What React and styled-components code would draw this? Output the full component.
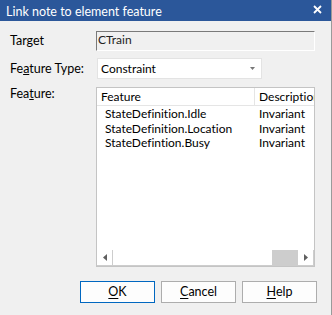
import React from "react";
import styled, { createGlobalStyle } from "styled-components";

const Global = createGlobalStyle`
  html, body { margin: 0; padding: 0; background: #f0f0f0; }
  body {
    font-family: "Lato", "Noto Sans", sans-serif;
    font-size: 12px;
    color: #000;
    font-variant-ligatures: none;
  }
`;

const Window = styled.div`
  width: 332px;
  height: 315px;
  box-sizing: border-box;
  border-right: 1px solid #9a9a9a;
  background: #f0f0f0;
  display: flex;
  flex-direction: column;
`;

const TitleBar = styled.div`
  height: 21px;
  background: #2b579a;
  color: #fff;
  display: flex;
  align-items: center;
  justify-content: space-between;
  padding: 2px 9px 0 6px;
  box-sizing: border-box;
  font-size: 12.5px;
`;

const CloseIcon = styled.svg`
  width: 9px;
  height: 9px;
  margin-top: -4px;
`;

const Body = styled.div`
  flex: 1;
  display: flex;
  flex-direction: column;
  padding: 10px 14px 0 10px;
`;

const Form = styled.div`
  display: grid;
  grid-template-columns: 86px 219px;
  row-gap: 7px;
  align-items: center;
`;

const Label = styled.div`
  line-height: 14px;
  font-size: 12.5px;
  align-self: ${(p) => (p.$top ? "start" : "center")};
  padding-top: ${(p) => (p.$top ? "1px" : "0")};
`;

const ReadOnlyBox = styled.div`
  height: 20px;
  box-sizing: border-box;
  border-top: 1px solid #7a7a7a;
  border-left: 1px solid #7a7a7a;
  border-right: 1px solid #fff;
  border-bottom: 1px solid #fff;
  padding: 1px 0 0 1px;
  line-height: 14px;
  color: #222;
`;

const Combo = styled.div`
  width: 165px;
  height: 21px;
  margin-left: 1px;
  box-sizing: border-box;
  background: #fff;
  border: 1px solid #e3e3e3;
  display: flex;
  align-items: center;
  justify-content: space-between;
  padding: 0 6px 0 3px;
`;

const Caret = styled.svg`
  width: 5px;
  height: 3px;
`;

const ListBox = styled.div`
  height: 180px;
  margin-top: 1px;
  box-sizing: border-box;
  border: 1px solid #c4c4c4;
  background: #fff;
  display: flex;
  flex-direction: column;
`;

const Grid = styled.div`
  flex: 1;
  overflow: hidden;
`;

const Columns = `
  display: grid;
  grid-template-columns: 158px 100px;
`;

const HeaderRow = styled.div`
  ${Columns}
  height: 18px;
  box-sizing: border-box;
  border-bottom: 1px solid #e5e5e5;
`;

const HeaderCell = styled.div`
  padding-left: 4px;
  line-height: 18px;
  white-space: nowrap;
  overflow: hidden;
  border-right: 1px solid #e5e5e5;
`;

const Row = styled.div`
  ${Columns}
  height: 14.5px;
  line-height: 14.5px;
`;

const Cell = styled.div`
  padding-left: ${(p) => (p.$first ? "8px" : "4px")};
  white-space: nowrap;
  overflow: hidden;
`;

const Rows = styled.div`
  padding-top: 1px;
`;

const HScroll = styled.div`
  height: 16px;
  background: #cdcdcd;
  display: flex;
  padding: 0 1px 1px 0;
  box-sizing: border-box;
  gap: 1px;
`;

const ScrollButton = styled.div`
  width: 15px;
  background: #fff;
  display: flex;
  align-items: center;
  justify-content: center;
`;

const Thumb = styled.div`
  width: 159px;
  background: #fff;
`;

const Track = styled.div`
  flex: 1;
`;

const ButtonBar = styled.div`
  display: flex;
  justify-content: flex-end;
  gap: 6px;
  margin-top: 14px;
`;

const Button = styled.div`
  width: 75px;
  height: 22px;
  box-sizing: border-box;
  background: #fdfdfd;
  border: 1px solid ${(p) => (p.$default ? "#0067c0" : "#adadad")};
  display: flex;
  align-items: center;
  justify-content: center;
  line-height: 14px;
  font-size: 12.5px;
  u { text-decoration: underline; text-underline-offset: 2px; }
`;

const rows = [
  ["StateDefinition.Idle", "Invariant"],
  ["StateDefinition.Location", "Invariant"],
  ["StateDefintion.Busy", "Invariant"],
];

export default function App() {
  return (
    <>
      <Global />
      <Window>
        <TitleBar>
          <span>Link note to element feature</span>
          <CloseIcon viewBox="0 0 9 9">
            <path d="M1 1 L8 8 M8 1 L1 8" stroke="#fff" strokeWidth="1.8" />
          </CloseIcon>
        </TitleBar>
        <Body>
          <Form>
            <Label>Target</Label>
            <ReadOnlyBox>CTrain</ReadOnlyBox>
            <Label>
              Fe<u>a</u>ture Type:
            </Label>
            <Combo>
              <span>Constraint</span>
              <Caret viewBox="0 0 5 3">
                <path d="M0 0 H5 L2.5 3 Z" fill="#777" />
              </Caret>
            </Combo>
            <Label $top>
              Fea<u>t</u>ure:
            </Label>
            <ListBox>
              <Grid>
                <HeaderRow>
                  <HeaderCell>Feature</HeaderCell>
                  <HeaderCell>Description</HeaderCell>
                </HeaderRow>
                <Rows>
                  {rows.map(([a, b]) => (
                    <Row key={a}>
                      <Cell $first>{a}</Cell>
                      <Cell>{b}</Cell>
                    </Row>
                  ))}
                </Rows>
              </Grid>
              <HScroll>
                <ScrollButton>
                  <svg width="4" height="7" viewBox="0 0 4 7">
                    <path d="M4 0 V7 L0 3.5 Z" fill="#606060" />
                  </svg>
                </ScrollButton>
                <Thumb />
                <Track />
                <ScrollButton>
                  <svg width="4" height="7" viewBox="0 0 4 7">
                    <path d="M0 0 V7 L4 3.5 Z" fill="#606060" />
                  </svg>
                </ScrollButton>
              </HScroll>
            </ListBox>
          </Form>
          <ButtonBar>
            <Button $default>
              <span><u>O</u>K</span>
            </Button>
            <Button>
              <span><u>C</u>ancel</span>
            </Button>
            <Button>
              <span><u>H</u>elp</span>
            </Button>
          </ButtonBar>
        </Body>
      </Window>
    </>
  );
}
